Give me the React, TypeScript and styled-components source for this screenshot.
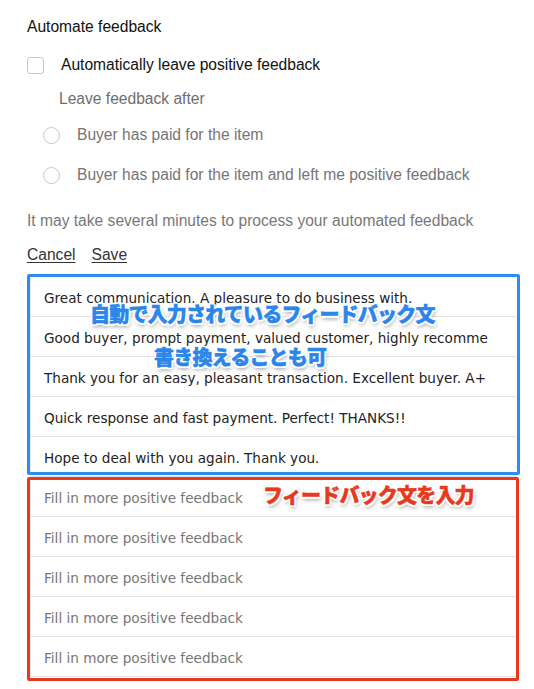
import React from "react";
import styled, { createGlobalStyle } from "styled-components";

const Global = createGlobalStyle`
  html, body { margin: 0; padding: 0; background: #ffffff; }
  body { font-family: "Liberation Sans", Arial, sans-serif; }
  * { box-sizing: border-box; }
`;

const Page = styled.div`
  width: 534px;
  height: 689px;
  padding: 17px 0 0 27px;
  overflow: hidden;
  display: flex;
  flex-direction: column;
  font-size: 15.6px;
  line-height: 20px;
`;

const Title = styled.div`
  color: #111;
`;

const CheckRow = styled.label`
  display: flex;
  align-items: center;
  gap: 17px;
  margin-top: 18px;
  color: #111;
`;

const CheckBox = styled.span`
  width: 17px;
  height: 17px;
  border: 1px solid #c8c8c8;
  border-radius: 3px;
  background: #fff;
  flex: none;
`;

const SubLabel = styled.div`
  color: #6e6e6e;
  margin: 14px 0 0 32px;
`;

const RadioRow = styled.label<{ $top: number }>`
  display: flex;
  align-items: center;
  gap: 17px;
  margin: ${(p) => p.$top}px 0 0 16px;
  color: #757575;
`;

const RadioDot = styled.span`
  width: 17px;
  height: 17px;
  border: 1px solid #c8c8c8;
  border-radius: 50%;
  background: #fff;
  flex: none;
`;

const Note = styled.div`
  color: #777;
  margin-top: 26px;
`;

const Actions = styled.div`
  display: flex;
  gap: 16px;
  margin-top: 14px;
`;

const LinkButton = styled.a`
  color: #333;
  text-decoration: underline;
  text-underline-offset: 2px;
  cursor: pointer;
`;

const Lists = styled.div`
  display: flex;
  flex-direction: column;
  margin: 12px 0 0 3px;
  width: 487px;
`;

const Group = styled.div`
  position: relative;
  display: flex;
  flex-direction: column;
`;

const Frame = styled.div<{ $color: string; $inset: string }>`
  position: absolute;
  inset: ${(p) => p.$inset};
  border: 3px solid ${(p) => p.$color};
  border-radius: 2px;
  pointer-events: none;
`;

const Field = styled.input`
  display: block;
  width: 100%;
  height: 40px;
  border: none;
  border-bottom: 1px solid #e2e2e2;
  border-left: 1px solid #ececec;
  margin: 0;
  padding: 2px 29px 0 13px;
  font-family: "DejaVu Sans", Verdana, sans-serif;
  font-size: 13.6px;
  color: #222;
  background: #fff;
  outline: none;
  &::placeholder {
    color: #767676;
  }
`;

const Callout = styled.div<{ $color: string; $left: number; $top: number }>`
  position: absolute;
  left: ${(p) => p.$left}px;
  top: ${(p) => p.$top}px;
  font-family: "Noto Sans CJK JP", "Noto Sans", sans-serif;
  font-weight: 900;
  font-size: 20px;
  line-height: 24px;
  letter-spacing: -0.8px;
  white-space: nowrap;
  color: ${(p) => p.$color};
  -webkit-text-stroke: 0.5px ${(p) => p.$color};
  pointer-events: none;
  text-shadow:
    2px 0 0 #fff, -2px 0 0 #fff, 0 2px 0 #fff, 0 -2px 0 #fff,
    1.5px 1.5px 0 #fff, -1.5px 1.5px 0 #fff, 1.5px -1.5px 0 #fff, -1.5px -1.5px 0 #fff,
    1px 3px 4px rgba(0, 0, 0, 0.45);
`;

const filled = [
  "Great communication. A pleasure to do business with.",
  "Good buyer, prompt payment, valued customer, highly recommended.",
  "Thank you for an easy, pleasant transaction. Excellent buyer. A+",
  "Quick response and fast payment. Perfect! THANKS!!",
  "Hope to deal with you again. Thank you.",
];

export default function App() {
  return (
    <>
      <Global />
      <Page>
        <Title>Automate feedback</Title>
        <CheckRow>
          <CheckBox />
          <span>Automatically leave positive feedback</span>
        </CheckRow>
        <SubLabel>Leave feedback after</SubLabel>
        <RadioRow $top={16}>
          <RadioDot />
          <span>Buyer has paid for the item</span>
        </RadioRow>
        <RadioRow $top={20}>
          <RadioDot />
          <span>Buyer has paid for the item and left me positive feedback</span>
        </RadioRow>
        <Note>It may take several minutes to process your automated feedback</Note>
        <Actions>
          <LinkButton>Cancel</LinkButton>
          <LinkButton>Save</LinkButton>
        </Actions>
        <Lists>
          <Group>
            {filled.map((t) => (
              <Field key={t} value={t} readOnly />
            ))}
            <Frame $color="#2d8cf0" $inset="-3px -3px 2px -3px" />
            <Callout $color="#2a86ea" $left={60} $top={25}>
              自動で入力されているフィードバック文
            </Callout>
            <Callout $color="#2a86ea" $left={124} $top={68}>
              書き換えることも可
            </Callout>
          </Group>
          <Group>
            {[0, 1, 2, 3, 4].map((i) => (
              <Field key={i} placeholder="Fill in more positive feedback" readOnly />
            ))}
            <Frame $color="#e8391d" $inset="0 -2px -4px -3px" />
            <Callout $color="#e8391d" $left={233} $top={6}>
              フィードバック文を入力
            </Callout>
          </Group>
        </Lists>
      </Page>
    </>
  );
}
